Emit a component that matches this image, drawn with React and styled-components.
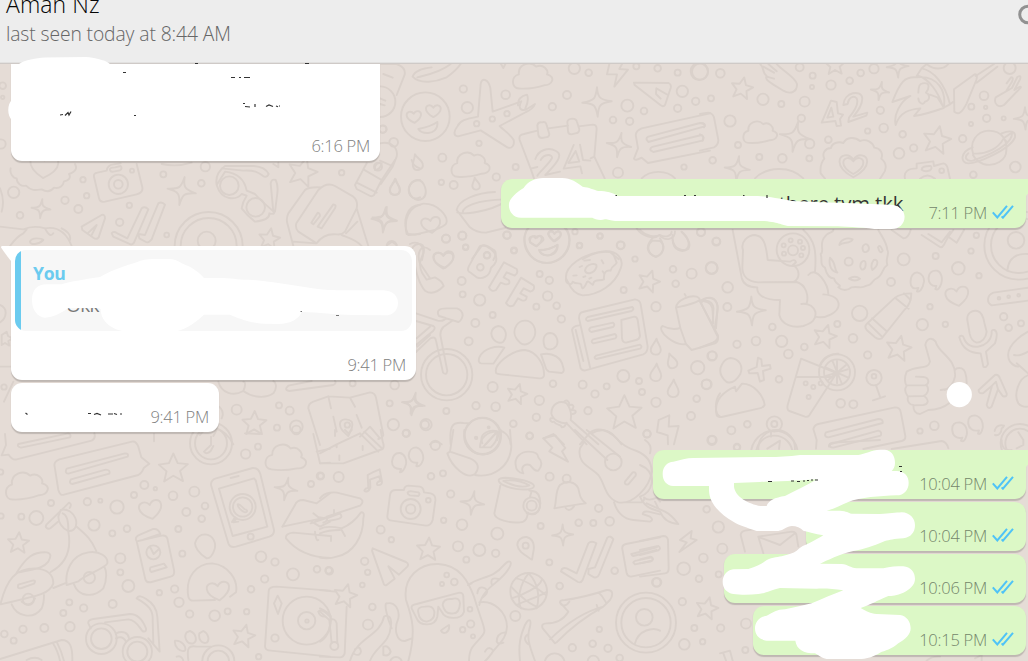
import React from 'react';
import styled, { createGlobalStyle } from 'styled-components';

const GlobalStyle = createGlobalStyle`
  * { box-sizing: border-box; }
  html, body { margin: 0; padding: 0; height: 100%; overflow: hidden; }
  body { font-family: "Open Sans", "Noto Sans", sans-serif; background: #e5dcd6; }
`;

const Screen = styled.div`
  position: relative;
  width: 1028px;
  height: 661px;
  overflow: hidden;
  display: flex;
  flex-direction: column;
`;

const Header = styled.header`
  flex: none;
  height: 64px;
  background: #ededed;
  border-bottom: 1px solid #cfcac7;
  box-shadow: inset 0 -1px 0 #e2e1e0;
  display: flex;
  justify-content: space-between;
  overflow: hidden;
`;

const Contact = styled.div`
  display: flex;
  flex-direction: column;
  padding-left: 6px;
  margin-top: -12px;
  white-space: nowrap;
`;

const Name = styled.div`
  font-size: 23px;
  line-height: 32px;
  letter-spacing: 0.1px;
  font-weight: 350;
  color: #050505;
`;

const Status = styled.div`
  font-size: 19.3px;
  line-height: 28px;
  letter-spacing: -0.1px;
  font-weight: 330;
  color: #666;
`;

const SearchIcon = styled.svg`
  display: block;
  flex: none;
  width: 12px;
  height: 30px;
`;

const Chat = styled.main`
  position: relative;
  flex: 1;
  overflow: hidden;
`;

const Wallpaper = styled.svg`
  position: absolute;
  left: 0;
  top: -64px;
  width: 1028px;
  height: 661px;
  fill: none;
  stroke: #dad1cb;
  stroke-width: 1.9;
  stroke-linecap: round;
  stroke-linejoin: round;

  path, circle { vector-effect: non-scaling-stroke; }
`;

const Messages = styled.div`
  position: relative;
  display: flex;
  flex-direction: column;
  padding: 0 2px 0 11px;
`;

const Bubble = styled.div`
  position: relative;
  display: flex;
  align-items: flex-end;
  justify-content: flex-end;
  align-self: ${p => (p.$out ? 'flex-end' : 'flex-start')};
  width: ${p => p.$w}px;
  height: ${p => p.$h || 49}px;
  margin-top: ${p => p.$gap ?? 3}px;
  padding: 0 ${p => (p.$out ? 12 : 10)}px 3px 0;
  background: ${p => (p.$out ? '#dcf8c6' : '#fff')};
  border-radius: ${p => p.$radius || '11px'};
  box-shadow: 0 1.5px 1px rgba(0, 0, 0, 0.17);
`;

const QuoteBubble = styled(Bubble)`
  flex-direction: column;
  justify-content: space-between;
  padding: 4px 4px 3px;
`;

const Quote = styled.div`
  width: 397px;
  height: 81px;
  border-radius: 11px;
  overflow: hidden;
  background: #f7f7f7;
  display: flex;
`;

const QuoteBar = styled.div`
  width: 6px;
  background: #6bcbef;
`;

const QuoteBody = styled.div`
  padding: 10px 0 0 12px;
`;

const QuoteAuthor = styled.div`
  font-size: 17.6px;
  line-height: 26px;
  font-weight: 700;
  letter-spacing: -0.3px;
  color: #6bcbef;
`;

const QuoteText = styled.div`
  font-size: 19px;
  line-height: 28px;
  margin-top: 5px;
  padding-left: 33px;
  letter-spacing: -0.6px;
  color: #777;
`;

const Body = styled.div`
  font-size: 20.3px;
  line-height: 28px;
  letter-spacing: -0.1px;
  margin: 0 25px 8px 0;
  color: #333;
  white-space: nowrap;
`;

const Time = styled.span`
  font-size: 16.5px;
  line-height: 24px;
  letter-spacing: -0.25px;
  font-weight: 320;
  color: ${p => (p.$out ? '#74866b' : '#808080')};
  white-space: nowrap;
  ${p => p.$quoted && 'margin-right: 6px;'}
`;

const TickIcon = styled.svg`
  width: 22px;
  height: 14px;
  margin: 0 0 6px 5px;
  fill: none;
  stroke: #4fc3f7;
  stroke-width: 2;
`;

const Tail = styled.svg`
  position: absolute;
  top: 0;
  ${p => (p.$out ? 'right: -12px;' : 'left: -11px;')}
  width: 12px;
  height: 19px;
`;

const Marks = styled.svg`
  position: absolute;
  inset: 0;
  width: 1028px;
  height: 661px;
  fill: #fff;
`;

function Ticks() {
  return (
    <TickIcon viewBox="0 0 22 14">
      <path d="M.8 7.4 5.3 12.5 15 .8M9.6 11.4l1.3 1.3L21 .8" />
    </TickIcon>
  );
}

function Outgoing({ time, text, tail, ...rest }) {
  return (
    <Bubble $out {...rest}>
      {tail && (
        <Tail $out viewBox="0 0 12 19"><path d="M0 0H12L0 17Z" fill="#dcf8c6" /></Tail>
      )}
      {text && <Body>{text}</Body>}
      <Time $out>{time}</Time>
      <Ticks />
    </Bubble>
  );
}

const STAR = 'M0-30 9-10 30-8 14 6 20 27 0 16-19 28-14 7-30-7-9-10Z';
const SPARK = 'M0-42C2-14 6-7 42-2 8 3 4 10 2 42-3 10-7 4-42 2-8-4-4-8 0-42Z';
const HEART = 'M0 26C-18 16-30 6-30-8-30-23-10-28 0-12 10-28 30-23 30-8 30 6 18 16 0 26Z';
const DROP = 'M0-24C4-10 15-2 15 9 15 19 8 24 0 24-9 24-15 18-15 9-15-2-4-10 0-24Z';
const CLOUD = 'M-42 33C-64 30-61-5-37-7-36-35 0-43 15-22 37-29 49-6 43 4 68 15 53 37 30 34 5 38-20 38-42 33Z';
const SHAPES = { star: STAR, spark: SPARK, heart: HEART, drop: DROP, cloud: CLOUD };

/* Each tile is drawn in thirds of a pixel from its own origin.
   dots: [cx, cy, r]; items: [shape, x, y, scale, rotation]; lines: path data. */
const TILES = [
  {
    at: [380, 60],
    dots: [
      [250, 87, 11], [377, 104, 13], [262, 143, 17], [381, 161, 8], [337, 177, 8], [290, 191, 8], [297, 250, 8],
      [187, 293, 12], [407, 321, 9], [349, 351, 11], [221, 375, 12], [184, 367, 8], [517, 140, 11], [561, 105, 12],
      [583, 25, 17], [626, 38, 10], [742, 137, 18], [792, 153, 10], [699, 180, 10], [749, 184, 11], [893, 145, 11],
      [907, 94, 17], [947, 124, 11], [958, 34, 26], [833, 25, 10], [893, 38, 9], [769, 19, 9], [714, 338, 15],
      [912, 321, 8], [198, 536, 12], [247, 527, 12], [381, 526, 11], [402, 571, 9], [257, 562, 8], [8, 208, 11],
      [585, 515, 8], [660, 528, 8], [722, 556, 12], [963, 517, 12], [598, 557, 8], [41, 247, 13],
      [136, 170, 73], [501, 541, 68], [321, 586, 9], [0, 125, 46],
    ],
    items: [
      ['spark', 651, 126, 1.05, 0], ['spark', 717, 255, 0.88, 12], ['spark', 12, 480, 0.9, 8],
      ['heart', 102, 170, 0.72, -5], ['heart', 160, 152, 0.74, 0], ['heart', 467, 542, 0.62, -5], ['heart', 524, 528, 0.62, 0],
      ['drop', 111, 306, 1, -15], ['drop', 45, 381, 1, 5], ['drop', 287, 371, 0.75, -10],
      ['cloud', 270, 311, 1.02, -8], ['cloud', 456, 45, 1.05, -8], ['heart', 153, 494, 0.95, -8], ['heart', 190, 600, 1, 0],
    ],
    lines: [
      'M115 207C135 203 155 198 172 186 175 208 158 220 142 219 128 219 119 214 115 207Z',
      'M477 570C495 570 512 568 532 554 532 572 518 586 501 586 489 586 480 580 477 570Z',
      'M0 12 50 12Q78 22 74 44L50 105M10 42 38 53M0 115 16 122M0 132 14 136',
      'M98 50C105 30 130 25 155 22M98 50C120 75 170 65 200 52 220 38 235 22 242 12M112 52C140 45 180 38 212 12',
      'M302 72C304 52 325 56 331 84L338 155 424 124C410 150 430 155 445 145L465 132C460 145 450 151 438 156L359 198C370 210 394 225 401 240 404 255 396 268 382 262L302 211 234 229C218 227 222 212 233 198 240 182 256 177 294 170Z',
      'M414 136C412 118 426 108 441 104 446 115 444 128 436 145',
      'M452 326 419 240C416 228 422 223 432 222L472 212M505 205 564 197M596 199 638 194Q650 194 650 207L643 290 674 355M452 326 472 321M632 295 643 290M452 326 462 355',
      'M472 196Q474 185 486 187 498 183 500 196L508 222Q508 232 496 232L486 234Q476 234 475 224ZM562 186Q563 177 577 176 589 176 591 186L598 208Q598 220 586 220L574 223Q564 223 564 213Z',
      'M466 297C475 270 505 260 528 273 553 285 525 315 496 345L540 335M482 300C493 280 518 282 516 294 505 315 480 333 472 347',
      'M581 255 551 326 601 319 606 340M600 254 609 300 631 302M587 273 565 309 598 305Z',
      'M688 12 681 43 711 43 703 80 744 29 718 27 726 12',
      'M762 68 866 69Q875 73 872 84L855 135Q850 142 842 136L764 75ZM829 85 864 105M829 85 828 102 842 116',
      'M990 160 785 205Q764 214 768 230L774 265 762 296Q765 304 785 293L804 309 990 272M800 239Q798 233 805 230L960 189Q976 188 974 199L805 246ZM812 271Q808 264 820 260L965 225Q975 231 967 242L820 276Z',
      'M112 360C134 360 146 400 129 415 106 430 84 405 87 383 91 368 100 362 112 360Z',
      'M80 522C70 480 85 440 130 431 175 430 205 470 199 489 196 500 176 503 164 510L105 524Z',
      'M230 450C235 420 290 398 345 396M230 450 268 500C285 515 300 518 318 518L375 504M232 457C250 465 330 455 376 425M249 459C244 440 290 420 374 418',
      'M0 250C35 242 55 265 50 290L38 320 2 373M0 302 37 318',
      'M785 355C810 330 860 328 885 355M770 505C785 530 825 540 838 525M838 525C855 545 885 540 885 514M817 542C800 555 800 580 826 590 850 585 858 555 840 543ZM878 541C880 570 905 580 925 567 935 550 920 530 905 516',
      'M277 596 305 558Q314 553 325 560L344 572Q352 580 340 600M608 598C635 580 660 572 690 576L716 598',
      'M363 12 370 24 376 12M95 580Q93 556 115 552 132 550 132 570L126 600M22 555 36 545 50 555',
    ],
  },
  {
    at: [700, 60],
    dots: [
      [61, 40, 13], [33, 115, 9], [189, 118, 17], [244, 132, 9], [314, 125, 15], [304, 175, 11], [90, 183, 17],
      [114, 255, 9], [178, 291, 9], [247, 295, 13], [329, 251, 14], [328, 295, 9], [385, 239, 10], [299, 22, 12],
      [338, 47, 9], [336, 81, 6], [393, 75, 14], [449, 62, 10], [482, 39, 10], [522, 26, 14], [541, 151, 11],
      [551, 204, 13], [503, 213, 8], [608, 223, 10], [641, 264, 11], [597, 280, 16], [788, 236, 11], [852, 107, 13],
      [814, 140, 9], [857, 142, 5], [860, 175, 11], [911, 175, 6], [813, 192, 6], [929, 24, 18], [820, 344, 10],
      [946, 321, 16], [725, 332, 7], [38, 301, 10], [0, 35, 24],
    ],
    items: [
      ['star', 126, 84, 1.08, 12], ['star', 405, 14, 1, 0], ['star', 711, 239, 1.38, 12], ['spark', 593, 20, 0.78, 0],
      ['spark', 540, 93, 0.66, 12], ['spark', 285, 230, 1.1, 12], ['spark', 112, 326, 0.9, 8], ['spark', 975, 175, 0.8, 0],
      ['heart', 460, 316, 1.38, 0], ['heart', 460, 316, 1, 0], ['cloud', 179, 214, 0.9, -8],
    ],
    lines: [
      'M181 13C195 25 185 38 200 48 192 58 210 68 250 92 272 105 292 95 291 72 285 50 250 35 230 12M205 12 230 34M190 20 222 38M200 50 222 56',
      'M365 188 393 122 410 126 414 160 429 164 420 177 423 197 410 198 406 183ZM382 173 394 143 400 170Z',
      'M430 135C432 95 485 88 487 115 487 138 472 155 460 170L502 158 499 167 445 186 447 173C462 155 478 132 470 115 460 105 445 113 443 132Z',
      'M577 126C600 65 615 48 650 52C715 45 740 95 731 144 700 155 665 165 642 168L661 145C630 148 600 155 587 195 580 165 600 125 631 108ZM668 70C695 65 685 90 678 98 690 103 692 120 675 125 670 138 655 128 655 115M655 98C655 75 661 70 668 70M690 104 712 112 728 137',
      'M650 48 665 25C700 32 735 70 750 133L731 143M655 48C685 55 715 95 728 138M665 25 680 12M680 12C700 30 730 30 745 12M750 133 760 125',
      'M762 88 824 43Q834 42 829 60L800 130C785 160 775 165 763 155ZM827 48 882 12M830 68 892 20',
      'M920 70 933 52Q942 51 936 65L919 92M936 84 952 51Q965 43 960 58L943 90Q965 75 962 83L912 135C895 145 880 132 887 112Z',
      'M362 340C360 320 365 305 373 296 365 280 375 265 393 264 395 250 415 243 430 249 440 230 465 230 480 243 500 235 518 248 523 263 542 265 550 280 544 296 562 310 560 330 548 344M362 340 375 356M548 344 540 356',
      'M165 355C200 320 270 315 310 355M615 356C610 335 625 325 650 325L650 311 700 304 702 318 730 310Q742 312 744 330L750 356M665 329Q665 317 692 318 698 324 690 331 675 337 665 329ZM660 356C675 343 690 343 705 356',
      'M819 280C808 245 830 215 865 212 910 212 922 245 919 270 920 300 885 322 850 312 835 306 824 295 819 285M905 220C930 210 948 212 945 232 930 270 830 310 805 310 780 310 780 275 818 262M819 280C860 285 895 265 911 235L935 218C940 235 915 270 818 302 800 305 790 292 805 280M911 235 922 248',
      'M0 162 25 158Q38 160 42 172L55 240Q55 255 42 262L0 272M0 190Q20 188 12 202M0 223Q14 228 8 242',
    ],
  },
  {
    at: [410, 230],
    dots: [
      [108, 26, 12], [157, 17, 12], [167, 51, 8], [291, 15, 11], [312, 62, 8], [155, 153, 12], [158, 193, 9],
      [209, 210, 17], [196, 279, 12], [248, 255, 9], [176, 334, 12], [389, 132, 9], [418, 151, 11], [413, 198, 14],
      [379, 230, 9], [440, 227, 10], [454, 267, 11], [509, 46, 8], [570, 18, 8], [632, 46, 11], [675, 87, 8],
      [641, 180, 9], [789, 118, 10], [845, 131, 15], [797, 161, 10], [905, 114, 18], [919, 34, 11], [873, 6, 12],
      [738, 230, 14], [248, 471, 15], [198, 527, 11], [257, 530, 13], [109, 543, 9], [388, 511, 14], [379, 562, 11],
      [310, 581, 10], [359, 617, 10], [429, 461, 10], [518, 464, 12], [555, 492, 11], [590, 469, 9], [534, 542, 11],
      [640, 438, 18], [687, 453, 9], [696, 486, 9], [738, 517, 14], [863, 413, 20], [907, 377, 13], [889, 463, 14],
      [860, 506, 10], [843, 558, 12], [711, 612, 11], [906, 630, 12], [48, 584, 17], [110, 434, 77], [110, 434, 62],
      [231, 76, 10], [211, 112, 10], [236, 592, 3], [199, 624, 3], [217, 618, 54],
    ],
    items: [
      ['heart', 102, 88, 1, -8], ['star', 717, 153, 1.08, 18], ['star', 321, 491, 1, 16], ['star', 643, 547, 1.72, 0],
      ['drop', 738, 350, 1, 4], ['drop', 785, 392, 0.95, -18], ['drop', 738, 427, 1.1, 5], ['drop', 790, 475, 1.1, 3],
      ['spark', 8, 522, 0.7, 15],
    ],
    lines: [
      'M209 49C225 40 265 65 258 94 252 110 240 112 242 118 238 138 218 148 202 143L182 128Q170 124 176 110Z',
      'M282 97 320 117Q326 130 314 137L290 127 281 142 297 151Q302 165 286 163L272 158 258 180Q244 188 237 172Z',
      'M333 143 371 166Q376 181 361 185L341 175 331 190 350 200Q350 215 336 211L324 205 311 226Q297 234 288 219Z',
      'M0 42C25 30 42 48 40 70 30 92 25 105 37 130L50 149 75 142Q96 152 101 168C80 190 60 192 45 182 25 160 15 120 8 65',
      'M18 250 83 272Q102 275 107 264L87 258C77 240 90 235 110 235L141 235Q157 240 158 256 155 272 145 276L92 260M18 273 70 288Q78 293 70 302L18 345M18 366 61 325Q76 318 78 332L99 428Q109 437 112 423L91 315Q91 300 100 291L127 272',
      'M265 288C290 291 293 320 280 335 265 345 245 330 244 310 245 298 254 290 265 288ZM345 272C370 272 380 298 374 318 365 340 345 350 330 338 310 320 310 300 320 285 327 275 336 272 345 272ZM421 309C440 310 447 335 439 348 430 360 412 362 404 350 395 325 405 309 421 309Z',
      'M259 430C248 405 305 360 345 360 382 365 404 405 402 437Q400 446 388 445L272 433Q262 432 259 430ZM250 401 213 400Q203 398 208 382C220 355 260 345 283 353ZM393 373 405 407Q407 420 417 425L455 429Q465 426 459 410C455 385 430 365 393 373Z',
      'M468 145C464 108 520 72 575 65 625 58 642 90 632 115 615 165 565 195 518 196 490 192 480 170 475 158ZM468 145C465 160 485 170 488 155 500 165 512 155 514 165 516 185 525 170 530 158 535 145 550 175 550 160 555 145 570 155 582 148 580 125 590 120 602 122 605 105 615 110 620 98L610 72M525 122C528 100 565 95 559 112 553 130 530 136 525 122Z',
      'M523 92 540 90M509 111 516 108M490 137 500 136M520 141 526 139M538 146 544 143M575 91 580 100M582 130 578 124',
      'M540 412 507 265Q507 248 518 246L675 208Q690 210 692 223L713 349Q713 368 700 373L526 421Q518 423 512 415L486 300Q488 288 508 286M497 300 520 393',
      'M533 261 667 231Q674 237 665 243L533 273Q523 268 533 261ZM541 293 609 278Q617 284 609 291L544 306Q533 300 541 293ZM550 328 615 312Q623 318 616 325L550 340Q540 335 550 328ZM558 377 690 344Q699 350 690 356L559 387Q549 384 558 377ZM634 270 673 260Q681 260 683 270L690 318Q688 328 678 330L648 338Q638 338 636 325Z',
      'M798 233C800 210 840 195 860 200 870 204 870 210 868 211 850 222 820 228 798 233L811 294Q785 302 758 288C748 292 755 310 775 325 795 340 815 345 828 342L811 294M868 211 924 316Q926 335 915 340L845 360 828 342M874 219C880 205 890 203 900 203 920 205 925 225 922 245L915 290M885 212C900 210 913 225 910 240L908 282M827 197 824 192',
      'M343 25C345-5 370-30 411-30 455-25 478 0 478 30 476 70 448 96 411 99 370 98 345 65 343 25ZM360 37C358 20 373 12 381 23 390 10 402 22 400 31L380 49ZM414 12C418-2 430 2 433 12 443-2 455 5 451 18L431 34ZM389 62C410 60 425 55 443 45 444 65 430 76 414 77 400 76 392 70 389 62Z',
      'M690 0C710 20 735 22 750 15M727 25C705 50 710 70 738 81 765 70 765 50 750 25M750 15C770 25 785 15 785 5M788 15C785 45 800 60 825 60 845 50 835 20 815 5',
      'M424 550C425 520 450 510 470 520 485 540 485 555 482 570M470 580C450 580 428 570 424 550M482 570 565 643M470 580 530 643M540 608 510 643M430 565C415 560 420 580 432 575 440 588 455 582 455 592 470 590 465 580 470 578M463 515C470 505 482 518 475 527 490 520 495 530 485 540 502 540 500 550 488 552',
      'M540 608C560 590 600 595 635 643M400 625 430 612 462 643 M746 570 778 556 776 590 806 588 792 643 M746 570 741 606 773 616 774 643',
      'M122 643C118 590 125 575 160 579L178 580M272 602C290 610 300 620 302 643M217 640C205 610 240 595 267 606L262 630M227 643 260 607',
      'M930 490C915 510 912 550 930 560M60 643Q75 628 95 643',
    ],
  },
  {
    at: [700, 230],
    dots: [
      [49, 35, 12], [35, 114, 17], [83, 172, 16], [82, 231, 12], [217, 291, 10], [168, 333, 13], [111, 343, 11],
      [245, 334, 17], [265, 372, 13], [313, 351, 10], [237, 448, 10], [412, 282, 9], [479, 250, 23], [459, 325, 13],
      [503, 375, 11], [422, 520, 13], [460, 523, 12], [573, 156, 12], [611, 88, 18], [707, 78, 9], [775, 115, 19],
      [813, 63, 8], [829, 16, 8], [837, 137, 8], [690, 230, 8], [667, 284, 17], [736, 283, 8], [911, 260, 11],
      [926, 293, 10], [963, 280, 9], [703, 587, 13], [660, 603, 8], [36, 378, 14], [20, 463, 15], [36, 631, 14],
      [94, 601, 12], [142, 583, 10], [111, 652, 9], [223, 582, 23], [223, 582, 9], [223, 672, 70], [223, 672, 55],
      [279, 61, 15], [411, 427, 54], [411, 427, 39], [522, 443, 23], [522, 439, 7], [948, 31, 25], [956, 46, 103],
      [956, 46, 83], [960, 640, 58], [960, 640, 44], [279, 59, 49], [272, 31, 6], [300, 35, 6], [309, 54, 6],
      [304, 76, 6], [251, 46, 6], [252, 71, 6], [317, 460, 6], [340, 471, 6], [362, 460, 6], [326, 501, 6],
      [897, 205, 4], [926, 200, 4], [956, 196, 4], [446, 95, 12],
    ],
    items: [
      ['spark', 154, 243, 1.03, 0], ['star', 375, 318, 1.15, 16], ['star', 596, 354, 1.25, 12], ['heart', 772, 198, 1.15, -10],
    ],
    lines: [
      'M98 0 125 143C130 165 150 172 172 172C170 190 185 210 240 210M129 60C120 35 145 15 165 15 190 18 198 40 203 90L270 95 Q285 85 288 97L279 105C300 118 302 145 280 156L175 157C140 155 128 135 127 115ZM175 157 290 156C320 165 326 200 320 220L304 222M240 210 238 255C245 285 280 295 310 288 335 280 350 270 346 245 340 228 325 220 304 222M346 260C380 268 415 245 416 225 416 205 400 195 370 193M325 135C350 105 385 165 385 193M310 0C345 30 350 65 345 125',
      'M375 20C382 5 400 10 400 0M375 20C355 40 375 65 362 72 368 90 358 105 375 113 380 135 390 145 402 145 405 165 430 165 415 172 430 185 445 180 455 172 480 168 480 178 500 167 520 165 515 150 530 145 550 135 545 115 562 105 555 85 570 70 562 60 560 35 545 20 535 0M418 45C420 30 440 20 458 28 452 42 430 35 418 45ZM390 83C410 100 400 115 412 128 395 125 385 108 390 83ZM488 58C485 45 500 35 506 50 510 65 490 74 488 58ZM481 110C480 95 495 85 497 100 498 120 483 125 481 110ZM521 90C535 85 538 105 517 120Q510 105 521 90ZM447 146Q465 135 480 146 465 157 447 146ZM534 52Q540 40 548 62 540 75 534 52Z',
      'M575 0 610 25Q625 25 632 0M685 12 725 37 750 5M665 15 720 51Q726 54 732 44L745 20 770 38 792 0M745 20 760 0',
      'M585 203C600 192 625 190 634 190 634 210 625 230 613 240L545 325Q535 330 525 322L500 300Q492 290 500 282ZM585 203 626 236M516 265 560 304M505 280 544 318M612 190 632 210',
      'M632 160C630 140 640 127 652 127 668 130 673 145 672 155 668 178 658 188 651 184L655 174C640 178 632 172 632 160ZM686 142C688 125 700 121 711 122 725 127 728 145 724 160 719 175 713 182 706 177L709 168C695 169 684 158 686 142Z',
      'M984 173 880 188C862 195 858 217 875 226L984 212',
      'M802 270C800 250 815 240 832 243 845 246 850 260 853 278L860 305C858 325 845 337 830 338 818 335 812 325 809 311ZM778 322C780 315 790 315 792 325 805 365 870 355 875 310Q873 298 883 300C895 305 890 325 885 340L858 365 864 402Q859 415 850 410L842 370C805 370 785 350 778 322Z',
      'M92 384C120 387 130 410 121 432 110 450 95 462 80 456 55 435 60 415 65 405 72 390 80 385 92 384ZM50 555C42 520 60 490 105 470L108 484 126 461C160 460 190 495 194 525Q188 535 175 536L65 561Q52 562 50 555Z',
      'M174 383 184 388 186 408 210 405 212 416 189 423 192 450 180 455 173 429 148 430 145 422 170 411Z',
      'M303 386 410 429 328 556Q323 562 315 560L268 543Q260 540 263 525ZM288 441 397 441M360 405C370 380 395 370 415 371M411 393V460M378 413 443 442M385 450 438 405M397 392 426 462M443 418 378 438',
      'M528 466 541 503M519 511 555 499',
      'M690 395 676 345C680 325 695 320 707 335 715 370 770 385 765 440 760 465 745 475 735 480M690 395C685 420 650 405 620 425 612 445 615 460 620 468 610 480 618 492 624 500 620 515 630 525 640 525 640 545 648 552 660 552L685 540C715 540 735 530 747 520M648 440 670 441C687 442 690 460 676 466L620 466M680 466C690 480 680 495 670 498L624 499M675 500C688 510 685 523 670 525L640 526M722 480 742 477M765 420Q770 412 785 415 800 420 800 460',
      'M836 480 885 435Q895 432 900 445L920 490Q922 503 908 498L894 478 875 530Q865 540 860 525L876 467 850 489Q835 492 836 480ZM876 467 888 455 894 478',
      'M348 656 350 630 340 597Q343 585 355 582L585 532Q600 532 602 545L616 618Q617 630 605 633L490 657M378 607 535 567Q550 567 548 579L385 622Q370 620 378 607ZM392 642 535 602Q547 605 542 617L400 653Q385 652 392 642ZM575 657 725 633Q740 635 745 655',
      'M202 656 240 632 237 657M213 605V620',
      'M757 602C755 582 765 577 778 577 798 580 803 600 800 615 796 630 790 637 783 632L787 623C770 627 758 617 757 602ZM805 582C803 562 812 556 825 556 845 560 850 580 848 594 845 608 841 614 834 611L837 601C818 605 807 595 805 582ZM884 603C888 583 905 585 912 587Q910 593 905 595C905 610 895 618 885 615',
      'M0 213C25 195 50 205 53 230L48 295M0 213 53 320Q54 330 40 337L0 353M10 213C30 215 38 230 38 245L40 280M984 305C930 335 915 370 930 395 938 405 950 410 955 410M942 375C960 380 975 370 984 365M950 400 984 430M984 436C955 445 940 495 955 520Q965 532 984 530M955 607 970 630V645L950 655',
      'M922 122C925 80 955 70 984 72',
    ],
  },
  {
    at: [0, 430],
    dots: [
      [2, 126, 8], [3, 258, 8], [64, 260, 9], [153, 219, 9], [109, 264, 21], [262, 215, 11], [301, 212, 6],
      [351, 231, 20], [282, 285, 17], [337, 310, 9], [381, 296, 10], [402, 195, 9], [433, 165, 12], [466, 176, 5],
      [519, 197, 13], [583, 185, 15], [559, 246, 12], [615, 228, 10], [605, 266, 10], [535, 297, 9], [361, 385, 15],
      [361, 427, 9], [385, 468, 18], [478, 488, 8], [524, 477, 11], [547, 371, 9], [537, 517, 14], [569, 552, 11],
      [644, 557, 16], [683, 544, 9], [740, 545, 8], [208, 517, 9], [190, 549, 9], [251, 534, 11], [338, 522, 12],
      [69, 598, 11], [133, 594, 12], [210, 590, 14], [13, 612, 10], [41, 632, 9], [753, 478, 10], [794, 447, 11],
      [783, 380, 16], [825, 396, 11], [879, 433, 18], [951, 418, 10], [986, 421, 10], [961, 138, 11], [933, 162, 9],
      [774, 50, 9], [737, 72, 14], [633, 40, 63], [633, 40, 48], [728, 231, 39], [728, 231, 29], [752, 320, 9],
      [920, 572, 72], [920, 572, 26], [921, 573, 5], [825, 624, 11], [268, 443, 17], [304, 626, 46], [304, 626, 31],
      [412, 665, 44], [412, 665, 30], [460, 367, 21], [655, 694, 48], [655, 694, 32], [776, 680, 8], [85, 508, 17],
      [889, 0, 13],
    ],
    items: [
      ['star', 520, 114, 1.45, 0], ['star', 55, 338, 1.05, 5], ['star', 731, 617, 1.12, 14], ['heart', 452, 238, 1.12, -12],
      ['heart', 655, 482, 1.12, -8], ['cloud', 857, 80, 1.08, -3], ['cloud', 78, 164, 1.12, -10], ['spark', 858, 177, 0.82, 12],
    ],
    lines: [
      'M15 12 18 45 5 76 26 74Q38 92 50 88L275 32Q288 25 283 10M55 42 205 10Q215 15 210 22L63 53Q50 50 55 42Z',
      'M164 110Q160 95 178 88L396 35Q408 32 415 50L424 82 448 101 432 113Q425 130 415 135L192 194Q180 198 175 180ZM200 116 375 70Q387 70 383 80L205 131Q193 130 200 116ZM213 148 317 119Q332 120 328 131L217 162Q205 160 213 148Z',
      'M633 20V45L612 65Q620 75 632 63L640 48M462 12V34M735 10 780 12M940 12 960 100 990 98M950 65 990 56',
      'M195 230 207 218Q217 222 209 234M195 230 140 283C133 292 143 300 152 294L174 275M182 240C200 235 220 245 228 270 232 290 222 305 205 303 185 295 175 275 175 260ZM188 250C205 255 205 285 205 298M205 305C215 360 200 400 152 426M230 290C260 315 275 330 289 363M50 428C80 380 100 365 140 367 155 370 153 380 145 395 130 415 110 416 52 428M2 520C20 450 45 415 105 415 150 418 160 440 160 460 150 490 125 495 2 523ZM55 464 97 452Q110 450 102 461L65 474Q50 478 55 464Z',
      'M35 523C50 560 100 570 125 535Q132 520 132 495M160 474 200 458M200 465C195 430 210 375 265 367 300 362 325 380 322 400 315 415 255 435 235 454Q215 460 200 465ZM222 463C235 500 280 505 310 475 322 450 320 420 312 410M65 515Q90 535 105 505',
      'M408 330Q405 320 420 314L460 297Q475 295 481 312L428 330 410 334 436 448Q440 460 455 456L512 440Q525 437 522 420L502 325Q498 315 485 317L410 334M452 412 492 401 500 412 454 426Q447 420 452 412ZM452 354 461 372 477 357M452 354Q445 350 450 350',
      'M615 313C640 315 650 340 643 360 638 375 630 385 620 385 595 370 585 350 585 340 590 322 600 313 615 313ZM565 500C555 440 590 400 637 400 685 405 715 450 708 487L690 500M565 500Q568 512 580 512L645 510',
      'M633 165Q632 150 648 145L758 114Q775 113 781 132L822 300Q823 315 808 320L708 350Q690 354 685 340ZM657 176 762 145Q768 150 769 158L802 290 698 318ZM692 144 716 138M710 265 700 277 715 275M705 262 696 276M713 223C720 220 728 235 735 238 745 240 742 247 735 247 725 245 712 230 713 223Z',
      'M847 290 885 225Q890 210 910 210L950 220 990 190M847 290 990 260M858 325Q855 310 880 308L990 318M858 325C890 365 940 382 990 384M932 280 985 262M940 250 955 262M935 275 960 290 990 275M945 305Q948 335 955 330',
      'M990 482 830 470Q805 470 806 485L795 650Q797 662 812 662L990 680M833 497 845 520 834 552 822 520ZM955 545C965 535 980 550 990 560M955 545Q958 560 975 560',
      'M265 580Q263 570 280 567L390 552C415 552 430 575 438 595Q440 608 427 603C420 595 410 570 385 568L315 577M265 580 272 595M410 505C415 495 425 498 440 508 460 520 470 535 472 560L479 665 445 625M410 505C445 525 460 540 458 570L460 640M348 610C370 600 385 610 387 625M348 625Q368 615 378 635',
      'M570 603C590 610 592 635 580 640 560 645 550 620 560 607ZM610 603C625 610 630 630 620 638 603 643 595 625 598 610ZM525 632C545 630 560 650 555 662 540 668 522 650 525 632ZM530 680C545 675 550 690 550 693M565 690C560 655 565 645 590 650L632 650',
      'M0 687 185 630C210 630 218 650 217 693M158 638Q175 665 180 693M170 635Q185 665 192 693M80 690Q105 677 125 690',
    ],
  },
  {
    at: [320, 430],
    dots: [
      [2, 138, 9], [56, 141, 15], [346, 46, 14], [259, 10, 11], [333, 139, 10], [369, 130, 9], [392, 192, 11],
      [182, 299, 12], [214, 329, 8], [371, 271, 8], [426, 284, 16], [414, 349, 15], [478, 360, 18], [439, 389, 9],
      [527, 370, 11], [532, 311, 18], [134, 394, 11], [143, 427, 8], [127, 465, 7], [28, 423, 11], [157, 531, 10],
      [144, 584, 15], [629, 18, 10], [689, 140, 12], [836, 235, 11], [776, 278, 10], [820, 279, 9], [869, 274, 13],
      [662, 288, 9], [688, 397, 9], [719, 468, 10], [884, 422, 10], [586, 558, 15], [838, 598, 8], [818, 641, 10],
      [864, 655, 11], [757, 653, 11], [450, 538, 7], [452, 582, 11], [428, 599, 8], [459, 619, 6], [380, 435, 7],
      [366, 462, 6], [403, 456, 10], [981, 11, 11], [1009, 457, 13], [272, 237, 30], [272, 237, 14], [325, 211, 7],
      [880, 96, 25], [635, 227, 25], [635, 227, 15], [740, 146, 12], [617, 347, 9], [626, 484, 55], [973, 562, 25],
      [978, 578, 90], [978, 578, 74], [488, 18, 55], [468, 23, 3], [704, 700, 30], [820, 694, 17], [899, 684, 10],
      [43, 648, 12], [228, 699, 18],
    ],
    items: [
      ['spark', 457, 219, 0.85, 10], ['spark', 728, 315, 0.75, 0], ['star', 325, 357, 1.15, 4], ['star', 76, 496, 1.15, 14],
    ],
    lines: [
      'M0 70 50 43 120 10M0 100 70 100 188 57Q194 50 188 35L182 0M120 10 175 65M133 5 188 57M50 43V52M58 76V90M128 48V60M75 0 85 10 95 0M45 0V18',
      'M216 95C218 75 228 68 240 69 255 72 260 90 258 103 253 120 248 127 240 127L243 117C225 118 216 110 216 95ZM266 77C267 60 278 52 289 52 305 56 312 75 309 90 304 105 298 111 289 108L292 98C278 100 267 92 266 77Z',
      'M145 175 143 135Q160 125 179 118L186 155Q186 167 172 165 168 155 182 153L177 139 150 149 151 172C145 190 130 185 134 180Q137 173 145 175Z',
      'M202 260 210 195Q212 180 228 180L252 180Q253 168 265 167L300 170Q310 172 312 187L332 190Q348 194 346 212L338 270Q333 287 318 287L215 272Q202 270 202 260ZM263 187Q265 183 275 184L295 187Q302 192 295 198L270 196Q262 193 263 187Z',
      'M400 0 390 65Q420 75 450 85C475 95 480 115 465 132C440 150 395 110 382 70L390 65M465 135C520 145 570 110 574 50L570 0M433 0C430 40 460 75 490 74 530 68 545 40 542 0M480 52C480 25 500 5 530 5 535 20 530 35 512 52ZM488 52 530 7',
      'M587 105C583 80 605 65 625 65 650 65 655 75 655 82 668 95 665 110 655 122 645 124 638 115 630 105 615 100 600 110 610 130 595 128 588 120 587 105Z',
      'M670 25 706 16 736 54 726 64 744 95 688 64 697 53Z',
      'M536 150C540 135 640 150 642 168 640 190 535 175 536 150ZM550 153Q590 145 628 166 600 178 550 153ZM541 167 523 250C525 270 570 280 600 277 620 275 622 260 624 248M628 182 638 183Q660 185 661 220 658 255 635 253L620 250M635 184 630 200',
      'M703 235C710 220 705 180 720 165 740 150 765 155 775 175 780 200 782 207 797 220Q765 224 703 235ZM737 234Q748 248 762 229',
      'M765 0 862 90M800 0 900 80M815 10C840-5 865 0 880 15 905 45 925 55 950 63 980 75 995 95 995 125 990 170 940 225 895 217 855 205 855 160 835 135 810 110 770 100 780 55L793 35M915 155 938 127Q950 125 947 137L925 163Q912 165 915 155Z',
      'M882 217C890 245 910 268 940 270L990 275Q1003 270 990 260L968 252Q970 242 985 245L1020 253M920 217 965 217Q975 212 972 202 985 215 1010 203L1020 215',
      'M726 417Q732 412 740 415L770 430 805 340Q815 330 829 340L788 450Q783 460 774 456L723 424ZM806 417 825 412 862 323Q872 315 880 328L838 432Q833 445 822 442L805 432Z',
      'M1020 322 918 342Q905 345 907 357L920 430Q923 440 933 440L1020 422M935 372 1010 352M937 377Q932 370 935 372M940 398Q942 392 952 391L995 382Q1003 388 994 393L945 403Z M1010 360 940 378',
      'M592 345C592 330 605 320 620 321 640 327 643 345 641 360L636 389C610 372 595 365 592 345Z',
      'M158 355 258 396Q268 402 262 410L237 434 205 409 224 446 200 465Q192 468 190 458L156 362Z',
      'M265 693C290 600 275 560 258 510 248 440 300 400 355 402 420 405 445 455 462 500 480 560 490 580 492 595 500 615 470 630 455 655 447 670 447 680 447 693M444 465C480 440 520 445 550 407 570 385 580 395 565 418 540 460 490 470 478 525M444 465 455 460M478 517C520 510 560 545 561 590 560 630 530 645 515 670 500 690 495 693 495 693M472 490Q475 465 495 475 512 485 485 505M515 462Q510 440 535 447M555 607Q530 610 530 635 535 645 550 638M495 665Q505 645 520 662',
      'M275 535Q272 525 290 522L418 488Q430 488 430 500L432 545C425 570 375 570 365 545L355 530 352 560C345 590 300 590 290 565ZM295 548Q290 530 315 530 340 525 343 545 345 570 320 575 298 573 295 548ZM368 525Q370 505 395 507 418 500 420 520 418 550 400 550 375 555 368 525ZM363 602Q370 595 387 585 390 600 378 608 367 612 363 602Z',
      'M626 430C600 460 590 510 603 535M626 430C655 460 660 500 650 535M573 470C600 500 640 530 655 530M588 445C620 450 665 485 678 495M575 505C610 495 660 470 665 450M590 525C620 510 660 500 680 485',
      'M720 517Q720 510 735 510 790 503 860 480C880 478 880 495 870 510L850 530Q770 575 712 635L705 640Q685 615 668 595 662 580 680 580C710 580 730 570 745 545ZM720 517C725 530 738 530 748 515M690 628C740 580 790 545 850 530M838 490C850 500 855 515 860 520M830 525 836 542',
      'M90 693C110 620 180 620 192 560 205 550 218 565 212 590 210 640 165 650 150 693M202 520C190 515 200 560 215 595M202 520C225 515 240 540 235 565 220 600 230 635 255 633L275 625M105 658Q120 645 123 665 120 680 103 672M190 650Q205 645 212 665 207 680 190 675Z',
      'M600 693C595 645 600 620 615 585 625 565 635 565 630 590 620 620 625 640 645 693M625 612Q605 625 625 643M945 640C955 600 1000 590 1020 602',
      'M0 480 45 485M80 530 74 670Q70 682 60 682L0 680M0 535C30 550 35 555 32 570 30 600 20 625 0 635M0 545 28 570 35 640M28 570Q45 562 50 580L52 640',
      'M0 205C15 185 45 185 60 190L120 205Q135 215 120 227L20 260M0 262 20 265Q25 272 10 278M20 265 60 250Q72 265 50 268L25 273M42 240V250M0 297C20 285 50 292 65 295Q100 280 123 247Q135 245 130 265C130 320 100 370 50 380 30 387 10 385 0 383M33 318V333M65 300 75 318M0 310Q25 300 60 300',
    ],
  },
  {
    at: [0, 160],
    dots: [
      [41, 97, 17], [60, 166, 10], [195, 121, 11], [235, 147, 12], [260, 107, 8], [249, 59, 8], [388, 136, 8],
      [359, 187, 11], [490, 43, 9], [604, 70, 10], [616, 20, 14], [500, 225, 7], [1025, 38, 8], [355, 73, 29],
      [355, 73, 13], [396, 32, 6], [620, 242, 27], [626, 258, 102], [626, 258, 84], [688, 77, 28], [767, 142, 28],
      [1175, 258, 15], [1134, 20, 12],
    ],
    items: [
      ['spark', 123, 146, 0.68, 8], ['spark', 545, 93, 1.02, 12], ['spark', 1154, 177, 0.88, 10], ['star', 808, 236, 1.05, 10],
      ['star', 908, 35, 1.45, 16], ['drop', 1185, 80, 1, 0], ['heart', 132, 18, 1.4, 5],
    ],
    lines: [
      'M32 25C28 40 40 55 50 55 50 72 65 80 78 77 95 95 110 90 125 88 142 98 155 92 162 83 180 88 190 75 192 64 210 62 212 50 207 42 228 35 232 25 225 12',
      'M282 50Q280 40 292 38L320 32Q322 15 340 13L362 10M282 50 297 115Q300 128 315 125L410 103Q430 98 427 82L410 12M330 30Q328 22 345 22L362 18Q368 25 360 31L340 35Q332 37 330 30Z',
      'M245 200 305 165Q315 162 315 175L296 232Q290 240 280 233L247 210ZM275 225 290 195 265 218',
      'M335 220Q340 212 352 220L382 235 425 145Q435 137 445 148L402 248Q395 258 385 250L340 230ZM415 222 435 225 475 130Q485 123 495 134L455 238Q445 250 438 246L418 235Z',
      'M650 75C645 45 660 30 675 18L760 18C790 20 800 30 806 42Q800 55 788 47C775 38 765 30 730 32L665 25M675 35C720 40 735 65 740 92L765 102Q785 125 822 155 825 165 808 160 810 180 765 185 740 165 725 145 728 125 740 107L725 102C710 120 665 125 650 75ZM820 155 812 70Q815 55 827 60 835 75 832 100L825 155',
      'M889 190 955 90Q980 65 1005 78L1060 110Q1075 122 1070 145L1035 215Q1025 225 1010 223C980 220 960 235 950 250L895 215Q885 205 889 190ZM962 82Q925 80 915 90L865 160Q858 175 862 190L880 258M934 188 953 158Q960 160 960 168L940 193ZM953 200 1000 133Q1010 133 1005 145L965 205ZM1070 145 1105 258M1072 185 1038 220M1025 225C1050 235 1070 240 1085 258M880 245 948 250',
      'M1065 75 1090 28 1145 60 1122 105Q1115 112 1105 105L1070 87ZM1070 68 1130 98M1090 28 1100 10M1145 60 1185 0M1125 20Q1130 5 1145 10 1140 30 1125 30Z',
      'M0 200 70 208Q100 195 135 205 190 195 215 258M30 258Q50 230 70 220L80 208M90 245C95 230 125 235 130 240 115 255 90 255 90 245ZM135 205Q150 235 160 220M185 205Q215 220 210 240M0 85Q15 120 5 155',
      'M1260 60C1230 60 1220 85 1230 105 1240 120 1255 115 1260 112M1260 135C1220 135 1205 185 1225 225L1260 222M1235 0Q1240 20 1260 25M485 12Q530 22 575 8M820 12 835 22V8',
    ],
  },
  {
    at: [0, 60],
    dots: [[8, 77, 10], [8, 112, 5], [3, 252, 14], [1149, 207, 11]],
    items: [],
    lines: [],
  },
  {
    at: [0, 235],
    dots: [
      [710, 524, 15], [837, 511, 9], [869, 527, 12], [889, 575, 19], [831, 578, 9], [1058, 445, 9], [1184, 450, 13],
      [1169, 505, 9], [1180, 569, 17], [1218, 595, 10], [1275, 569, 12], [1042, 570, 8], [12, 456, 8],
    ],
    items: [['star', 763, 564, 1.2, 2], ['spark', 1240, 507, 0.82, 12]],
    lines: [
      'M655 440C665 475 700 485 730 468 742 440 730 440 730 440M730 468C760 490 800 490 820 475 835 455 825 440 820 438M865 452 935 438M865 452Q850 465 868 468L1000 450Q1010 445 1005 437',
      'M960 630 925 520Q925 505 940 500L985 484 1050 488 1110 472Q1125 473 1128 488L1150 600Q1147 610 1135 612M985 484 993 520M1000 545 1010 590M1050 488 1065 515M1070 540 1085 578M1020 565C1022 550 1045 550 1055 560 1063 575 1050 590 1045 603 1030 590 1018 580 1020 565ZM1080 605 1110 575 1140 610',
      'M0 210C25 220 20 250 0 262M0 395H32M5 300 20 290 24 303 38 310 25 318 28 332 15 324 5 330ZM12 500 40 440',
      'M1290 45C1260 20 1250 60 1260 85L1290 130M1250 310 1290 275M1290 300 1252 335',
      'M630 510C660 505 675 530 665 550M600 600C620 570 670 570 700 628M640 603 650 585',
    ],
  },
  {
    at: [640, 440],
    dots: [
      [200, 208, 10], [235, 261, 17], [247, 326, 15], [190, 354, 13], [131, 386, 19], [177, 416, 10], [236, 403, 9],
      [51, 427, 13], [127, 485, 11], [163, 564, 9], [242, 564, 11], [318, 551, 15], [133, 613, 16], [188, 605, 8],
      [316, 630, 9], [291, 21, 10], [410, 25, 55],
    ],
    items: [['star', 201, 504, 1.1, 14]],
    lines: [
      'M155 273 120 300 140 307 118 336 170 300 152 295Z',
      'M0 303 70 288Q82 288 84 300L86 385Q86 400 75 400L0 410M0 330 55 318Q65 325 55 331L0 345M0 358 32 350Q42 355 35 363L0 370',
      'M0 170C10 195 25 205 45 210L60 215Q75 250 115 252 95 225 75 215L20 190M45 185 55 205',
      'M315 335 302 285Q303 275 315 272L380 262M355 290 455 275Q470 275 470 290L475 320M355 290 370 340M358 292 420 315 465 280M240 640 270 632 278 662M250 640 258 662',
      'M0 75C25 85 38 105 35 130 30 155 15 165 0 170M15 0C30 10 35 20 30 40',
      'M567 20Q565 10 580 8L720 0M1085 0Q1085 35 1115 30M860 662Q875 648 900 650M1005 655 1025 645V662',
    ],
  },
];

function Doodles() {
  return (
    <Wallpaper viewBox="0 0 1028 661">
      {TILES.map((tile, i) => (
        <g key={i} transform={`translate(${tile.at[0]} ${tile.at[1]}) scale(.33333)`}>
          {tile.dots.map(([cx, cy, r], j) => <circle key={j} cx={cx} cy={cy} r={r} />)}
          {tile.items.map(([shape, x, y, s, turn], j) => (
            <path key={j} d={SHAPES[shape]} transform={`translate(${x} ${y}) rotate(${turn}) scale(${s})`} />
          ))}
          <path d={tile.lines.join('')} />
        </g>
      ))}
    </Wallpaper>
  );
}

function Scribbles() {
  return (
    <Marks viewBox="0 0 1028 661">
      <path d="M19 64C25 60 36 58 45 57.500L86 57C96 57.500 100 60 104 60.500Q108 62 110 64V68H19ZM12 100C7 104 7 116 12 120Z" />
      <path
        transform="translate(490 170) scale(.3432 .33333)"
        d="M55 105C55 85 80 65 98 54 110 35 130 24 155 24L210 24C235 24 255 38 270 50 290 53 300 58 315 63 340 63 358 68 372 78L780 78C830 82 850 88 880 93 920 95 1000 98 1060 100L1165 104C1192 104 1208 122 1208 140 1208 162 1192 177 1170 177L1120 177C1080 172 1030 170 1000 169L868 168C850 165 845 158 800 153L365 153C350 152 345 148 335 148 320 152 305 148 298 143L90 143C68 143 55 125 55 105Z"
      />
      <path
        transform="translate(0 235) scale(.33333)"
        d="M96 195C96 165 112 148 140 148L185 148C210 140 260 132 300 126 340 103 380 92 410 82 425 74 440 72 460 72L510 72C530 73 538 82 550 87 580 98 600 115 612 129L670 129C700 131 720 134 760 135 830 142 900 155 960 163 990 167 1040 166 1150 166 1180 167 1194 185 1194 203 1194 225 1180 241 1155 241L1060 240C1000 238 960 233 905 230 900 250 870 267 835 267L790 266C750 264 710 248 690 239L612 239C595 255 565 280 530 289L370 289C340 282 303 265 302 222L295 219 205 220C185 232 160 248 135 248 112 246 96 225 96 195Z"
      />
      <path
        transform="translate(640 440) scale(.33333)"
        fillRule="evenodd"
        d="M68 102C68 80 82 66 100 65 120 60 140 54 160 54L370 51C400 52 440 50 480 45L655 45C675 42 695 30 720 29L735 29C755 32 765 48 765 68 765 78 762 86 755 93L770 93C792 93 806 108 806 128 806 150 792 166 770 166 720 168 660 172 625 186 600 196 580 208 560 212L600 212C620 213 625 219 635 221L720 222C750 220 765 218 785 217 810 218 825 235 825 256 825 278 812 292 790 295 760 297 750 300 735 303 700 318 670 328 640 333 600 342 560 362 540 371L605 372C625 374 630 383 650 385L730 385C750 380 770 379 790 379 812 381 825 397 825 416 825 435 810 448 790 458 770 466 755 468 745 468 710 482 690 495 662 504 680 514 690 520 710 522L780 525C800 528 812 545 812 565 812 585 795 598 775 610 755 628 735 632 720 638 700 650 685 655 665 657L560 657C545 655 535 645 525 640 490 640 470 628 466 602L385 602C362 602 345 588 345 565 345 545 360 530 380 527 400 518 410 508 435 508 465 503 490 495 515 490 550 475 580 462 610 451 580 447 560 445 530 446L420 444C390 450 380 460 355 462 330 465 300 465 280 462 260 458 248 445 248 425 248 405 262 390 280 388L325 387C350 380 365 372 375 364 390 353 410 352 425 349 445 343 460 340 470 332 480 320 495 315 510 308 525 300 540 293 550 286 525 282 505 275 490 272 480 262 460 255 445 260 430 267 425 272 410 273L350 273C320 262 300 257 280 245 240 222 207 190 207 150L207 138 100 138C80 137 68 122 68 102ZM282 129 360 126C400 124 470 123 531 118 500 137 465 152 435 168 405 172 385 182 380 198L362 198C325 192 285 170 282 140Z"
      />
      <circle cx="959.300" cy="394.600" r="12.600" />
      <g fill="none" stroke="#333" strokeWidth="1.200">
        <path d="M195 63.500h3M305 63.500h4M123 72.500h3M231 77.500h4M239 77.500h2M244 77.500h6" />
        <path d="M243 103.500h2M245 106.500 250 107M255 104v3M266 106.500l3-1.500 4 1.500M276 106l2 .8M279 106h1M60 115l3-.5M65 115.500l3-3 1 2.500 2-3.500M134 115.500h2" />
        <path d="M25.500 413l2 1.500M88 413.500h3M94 414.500l3-1 4 1.500M108 414h5M114 413.500l3 1M120 414h2" />
        <path d="M615.500 195.500h1.500M684 195.500h2M694 195.500h2M743 195.500h1.500M767 195v3" />
        <path d="M768 481.500h4M791 481h3M797 481.500h3M803 481h2M807 480.500h2M811 480h2M815 480h3M899 466.500h3M900 471.500h2" />
        <path d="M336 315.500h3M300.500 311.500h1.500" stroke="#777" />
      </g>
    </Marks>
  );
}

export default function App() {
  return (
    <>
      <GlobalStyle />
      <Screen>
        <Header>
          <Contact>
            <Name>Aman Nz</Name>
            <Status>last seen today at 8:44 AM</Status>
          </Contact>
          <SearchIcon viewBox="0 0 12 30">
            <circle cx="12" cy="14.500" r="8.300" fill="none" stroke="#919191" strokeWidth="3" />
          </SearchIcon>
        </Header>
        <Chat>
          <Doodles />
          <Messages>
            <Bubble $w={369} $h={97} $gap={0} $radius="0 0 11px 11px"><Time>6:16 PM</Time></Bubble>
            <Outgoing $w={525} $gap={18} $radius="11px 0 11px 11px" time="7:11 PM" text="there tym tkk" tail />
            <QuoteBubble $w={405} $h={134} $gap={18} $radius="0 11px 11px 11px">
              <Tail viewBox="0 0 12 19"><path d="M1.500 0H12V16Q9 13 1 1.500Z" fill="#fff" /></Tail>
              <Quote>
                <QuoteBar />
                <QuoteBody>
                  <QuoteAuthor>You</QuoteAuthor>
                  <QuoteText>Okk</QuoteText>
                </QuoteBody>
              </Quote>
              <Time $quoted>9:41 PM</Time>
            </QuoteBubble>
            <Bubble $w={208}><Time>9:41 PM</Time></Bubble>
            <Outgoing $w={373} $gap={18} $radius="11px 0 11px 11px" time="10:04 PM" tail />
            <Outgoing $w={220} time="10:04 PM" />
            <Outgoing $w={302} time="10:06 PM" />
            <Outgoing $w={273} time="10:15 PM" />
          </Messages>
        </Chat>
        <Scribbles />
      </Screen>
    </>
  );
}
